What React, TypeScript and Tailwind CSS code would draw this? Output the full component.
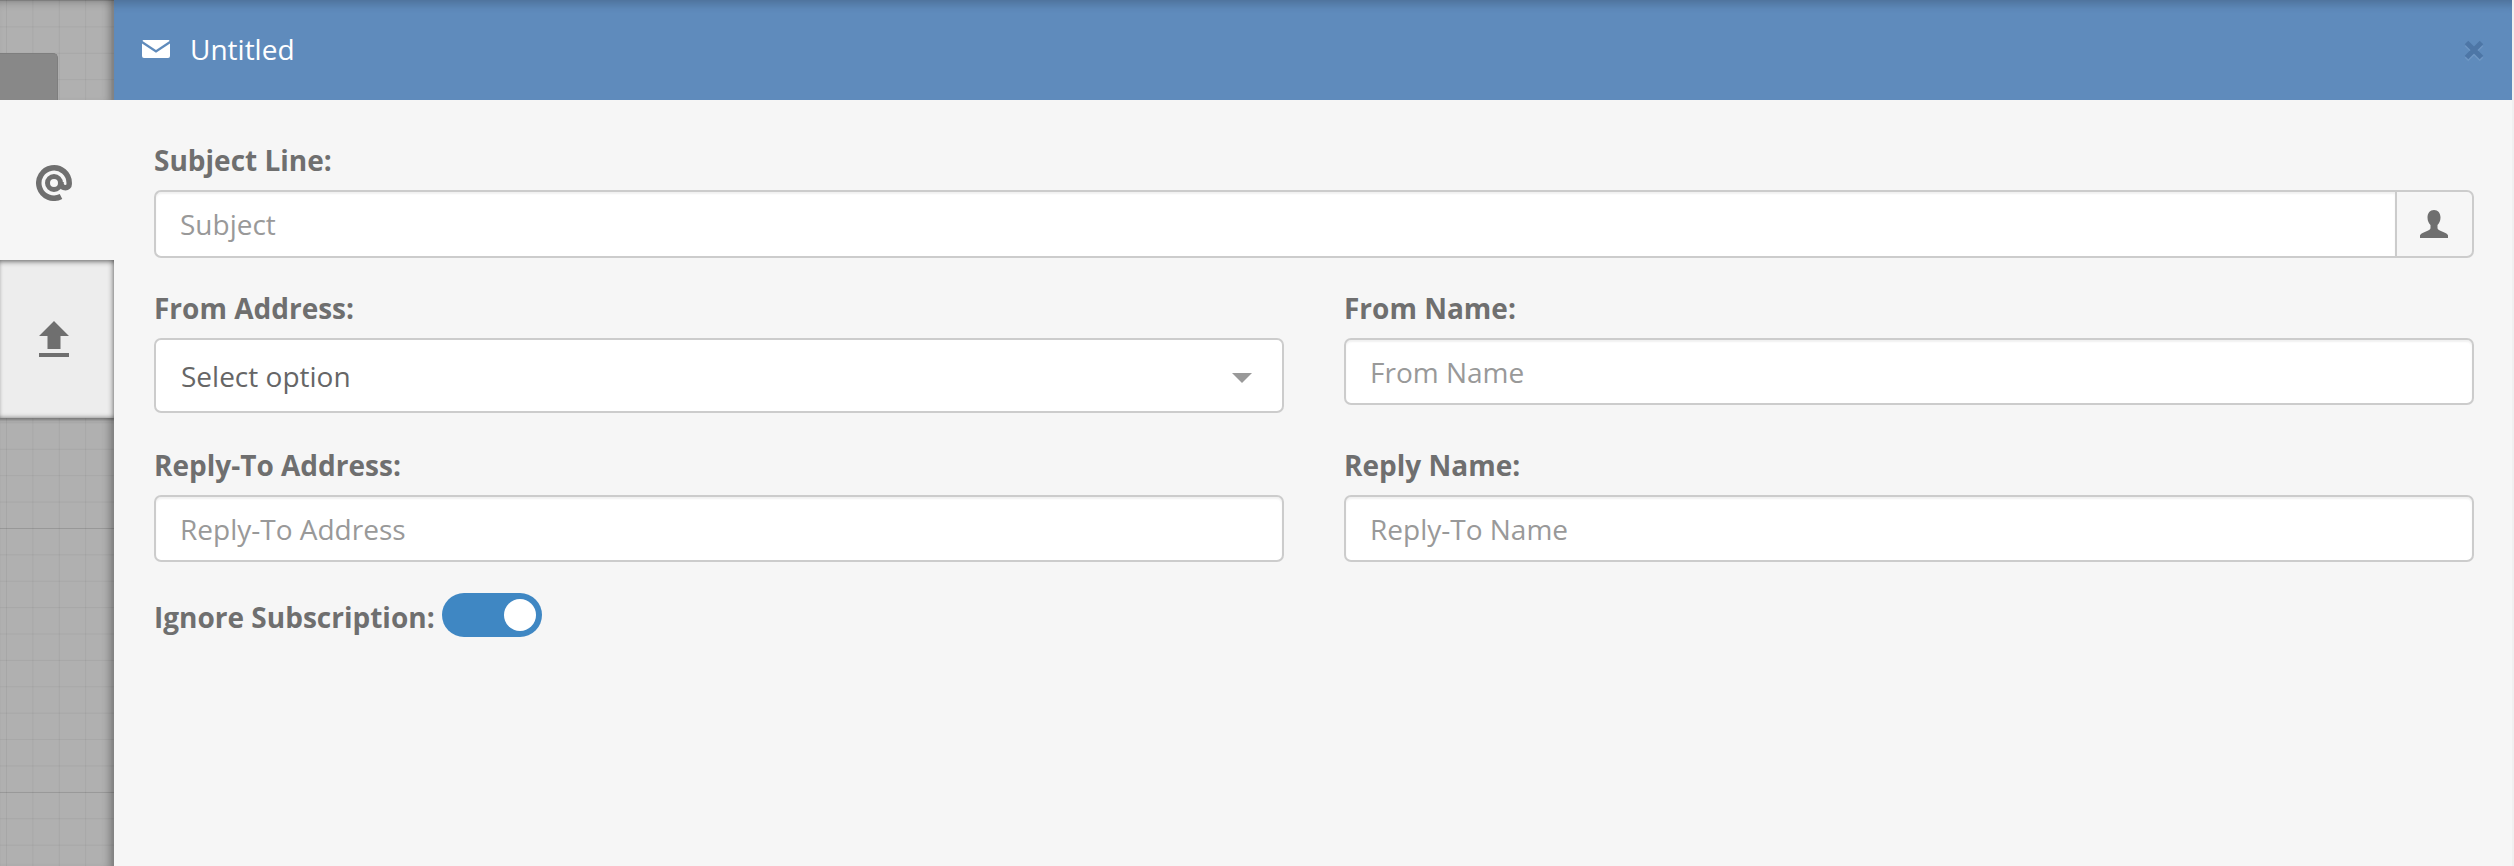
import React from 'react'

const labelClass = "block h-[36px] mb-[12px] text-[28px] leading-[36px] font-bold text-[#6f6f6f]"
const inputClass = "block w-full h-[67px] bg-white border-2 border-[#cccccc] rounded-[7px] px-[24px] text-[28px] text-[#666666] placeholder:text-[#999999] outline-none shadow-[inset_0_2px_2px_rgba(0,0,0,0.06)]"
const gridClass = "bg-[#b0b0b0] bg-[linear-gradient(rgba(0,0,0,0.05)_1px,transparent_1px),linear-gradient(90deg,rgba(0,0,0,0.05)_1px,transparent_1px),linear-gradient(rgba(0,0,0,0.09)_1px,transparent_1px)]"

const Field = ({ label, placeholder }: { label: string; placeholder: string }) => (
    <div>
        <label className={labelClass}>{label}</label>
        <input className={inputClass} placeholder={placeholder} spellCheck={false} />
    </div>
)

const App = () => {
    return (
        <main className="flex w-full h-screen overflow-hidden font-['Open_Sans',sans-serif]">
            <div className="flex flex-col w-[114px] shrink-0">
                <div className={`relative h-[100px] overflow-hidden shadow-[inset_-10px_0_8px_-6px_rgba(0,0,0,0.3),inset_0_8px_8px_-6px_rgba(0,0,0,0.25)] bg-[size:26.4px_26.4px,26.4px_26.4px,100%_264px] bg-[position:0px_0px,6px_0px,0px_0px] ${gridClass}`}>
                    <div className="absolute left-0 top-[53px] w-[58px] h-[60px] bg-[#888888] rounded-tr-[5px] border-r border-t border-[#7e7e7e]" />
                </div>
                <div className="flex items-center justify-center h-[160px] pr-[6px] pt-[6px] bg-[#f6f6f6] text-[#6f6f6f]">
                    <svg width="36" height="36" viewBox="0 0 36 36" fill="none" stroke="currentColor">
                        <circle cx="18" cy="18" r="6.5" strokeWidth="5" />
                        <path d="M25 31.500A15.200 15.200 0 1 1 33.200 18V19C33.200 24 26 24 25 19V17" strokeWidth="5.500" />
                    </svg>
                </div>
                <div className="flex items-center justify-center h-[158px] pr-[6px] bg-[#ededed] shadow-[inset_-4px_0_5px_-2px_rgba(0,0,0,0.3),inset_0_4px_5px_-2px_rgba(0,0,0,0.45),inset_0_-3px_4px_-2px_rgba(0,0,0,0.3)] text-[#6f6f6f]">
                    <svg width="30" height="36" viewBox="0 0 30 36" fill="currentColor">
                        <polygon points="15,0 30,15 21.500,15 21.500,28 8.500,28 8.500,15 0,15" />
                        <rect x="0" y="32" width="30" height="4" />
                    </svg>
                </div>
                <div className={`flex-1 shadow-[inset_-10px_0_8px_-6px_rgba(0,0,0,0.3),inset_0_4px_3px_-2px_rgba(0,0,0,0.3)] bg-[size:26.4px_26.4px,26.4px_26.4px,100%_264px] bg-[position:0px_4.4px,6px_0px,0px_110px] ${gridClass}`} />
            </div>
            <div className="flex flex-col flex-1 min-w-0 pr-[2px] bg-[#f0f0f0]">
                <header className="flex items-center h-[100px] pl-[28px] pr-[28px] pb-[2px] bg-[#5f8bbc] shadow-[inset_0_12px_10px_-8px_rgba(0,0,0,0.2)] text-white">
                    <svg width="28" height="18" viewBox="0 0 28 18" fill="currentColor" className="mr-[20px]">
                        <path d="M2 0h24c1 0 1.500.5 1.500 1L14 10 .5 1C.5.5 1 0 2 0z" />
                        <path d="M0 3.500l14 9.300 14-9.300V16a2 2 0 0 1-2 2H2a2 2 0 0 1-2-2z" />
                    </svg>
                    <span className="text-[28px] leading-none">Untitled</span>
                    <svg width="20" height="22" viewBox="0 0 20 22" className="ml-auto mt-[4px]">
                        <path d="M2.500 4.500L17.500 19.500M17.500 4.500L2.500 19.500" stroke="#6f97c4" strokeWidth="5" />
                        <path d="M2.500 2.500L17.500 17.500M17.500 2.500L2.500 17.500" stroke="#4d76a6" strokeWidth="5" />
                    </svg>
                </header>
                <div className="flex-1 bg-[#f6f6f6] pl-[40px] pr-[38px] pt-[42px]">
                    <label className={labelClass}>Subject Line:</label>
                    <div className="flex h-[68px]">
                        <input className="flex-1 min-w-0 h-full bg-white border-2 border-r-0 border-[#cccccc] rounded-l-[7px] px-[24px] text-[28px] placeholder:text-[#999999] outline-none shadow-[inset_0_2px_2px_rgba(0,0,0,0.06)]" placeholder="Subject" spellCheck={false} />
                        <div className="flex items-center justify-center w-[79px] h-full pr-[2px] border-2 border-[#cccccc] rounded-r-[7px] bg-[#f6f6f6] text-[#6f6f6f]">
                            <svg width="28" height="28" viewBox="0 0 28 28" fill="currentColor">
                                <path d="M14 0c4 0 6.500 3 6.500 7.500 0 3.500-1.500 6-3 7.500v3c0 1.500 1.500 2 4 3.200 3 1.300 6.500 2.800 6.500 4.300V28H0v-2.500c0-1.500 3.500-3 6.500-4.300 2.500-1.200 4-1.700 4-3.200v-3c-1.500-1.500-3-4-3-7.500C7.500 3 10 0 14 0z" />
                            </svg>
                        </div>
                    </div>
                    <div className="grid grid-cols-2 gap-x-[60px] gap-y-[34px] mt-[32px]">
                        <div>
                            <label className={labelClass}>From Address:</label>
                            <div className="flex items-center justify-between h-[75px] bg-white border-2 border-[#cccccc] rounded-[7px] pl-[25px] pr-[30px] text-[28px] text-[#666666]">
                                <span>Select option</span>
                                <svg width="20" height="10" viewBox="0 0 20 10" fill="#999999" className="mt-[4px]">
                                    <polygon points="0,0 20,0 10,10" />
                                </svg>
                            </div>
                        </div>
                        <Field label="From Name:" placeholder="From Name" />
                        <Field label="Reply-To Address:" placeholder="Reply-To Address" />
                        <Field label="Reply Name:" placeholder="Reply-To Name" />
                    </div>
                    <div className="flex items-center mt-[31px]">
                        <span className="text-[28px] leading-[36px] font-bold text-[#6f6f6f] mr-[7px] mt-[3px]">Ignore Subscription:</span>
                        <div className="flex items-center justify-end w-[100px] h-[44px] rounded-full bg-[#3f87c3] pr-[6px]">
                            <div className="w-[32px] h-[32px] rounded-full bg-white" />
                        </div>
                    </div>
                </div>
            </div>
        </main>
    )
}

export default App
